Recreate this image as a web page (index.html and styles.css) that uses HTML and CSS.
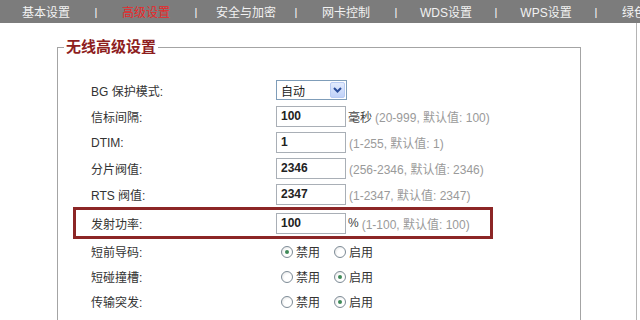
FILE: index.html
```html
<!DOCTYPE html>
<html lang="zh-CN">
<head>
<meta charset="utf-8">
<title>无线高级设置</title>
<link rel="stylesheet" href="styles.css">
</head>
<body>
<nav class="nav">
  <span class="item">基本设置</span><span class="sep">|</span>
  <span class="item active">高级设置</span><span class="sep">|</span>
  <span class="item">安全与加密</span><span class="sep">|</span>
  <span class="item">网卡控制</span><span class="sep">|</span>
  <span class="item">WDS设置</span><span class="sep">|</span>
  <span class="item">WPS设置</span><span class="sep">|</span>
  <span class="item">绿色无线</span>
</nav>
<div class="page">
  <fieldset class="box">
    <legend class="title">无线高级设置</legend>
    <div class="rows">
      <div class="row">
        <span class="label">BG 保护模式:</span>
        <div class="field">
          <div class="select"><span class="sel-text">自动</span><span class="sel-arrow"><svg width="9" height="6" viewBox="0 0 9 6"><path d="M1 1 L4.5 4.5 L8 1" fill="none" stroke="#2a4d9b" stroke-width="2"/></svg></span></div>
        </div>
      </div>
      <div class="row">
        <span class="label">信标间隔:</span>
        <div class="field"><span class="input">100</span><span class="unit">毫秒</span><span class="hint">(20-999, 默认值: 100)</span></div>
      </div>
      <div class="row">
        <span class="label">DTIM:</span>
        <div class="field"><span class="input">1</span><span class="hint">(1-255, 默认值: 1)</span></div>
      </div>
      <div class="row">
        <span class="label">分片阀值:</span>
        <div class="field"><span class="input">2346</span><span class="hint">(256-2346, 默认值: 2346)</span></div>
      </div>
      <div class="row">
        <span class="label">RTS 阀值:</span>
        <div class="field"><span class="input">2347</span><span class="hint">(1-2347, 默认值: 2347)</span></div>
      </div>
      <div class="row row-hl">
        <span class="label">发射功率:</span>
        <div class="field"><span class="input">100</span><span class="unit">%</span><span class="hint">(1-100, 默认值: 100)</span></div>
      </div>
      <div class="row row-radio">
        <span class="label">短前导码:</span>
        <div class="field radios">
          <span class="radio checked"></span><span class="rlabel">禁用</span>
          <span class="radio"></span><span class="rlabel">启用</span>
        </div>
      </div>
      <div class="row row-radio">
        <span class="label">短碰撞槽:</span>
        <div class="field radios">
          <span class="radio"></span><span class="rlabel">禁用</span>
          <span class="radio checked"></span><span class="rlabel">启用</span>
        </div>
      </div>
      <div class="row row-radio">
        <span class="label">传输突发:</span>
        <div class="field radios">
          <span class="radio"></span><span class="rlabel">禁用</span>
          <span class="radio checked"></span><span class="rlabel">启用</span>
        </div>
      </div>
      <div class="row row-radio">
        <span class="label">WMM 能力:</span>
        <div class="field radios">
          <span class="radio checked"></span><span class="rlabel">禁用</span>
          <span class="radio"></span><span class="rlabel">启用</span>
        </div>
      </div>
    </div>
  </fieldset>
</div>
</body>
</html>
```

FILE: styles.css
```css
html, body {
  margin: 0;
  padding: 0;
  background: #ffffff;
  overflow: hidden;
  height: 320px;
}
body {
  font-family: "Liberation Sans", Arial, "Noto Sans CJK SC", sans-serif;
  font-size: 12px;
  color: #333333;
}
.nav {
  display: flex;
  height: 23px;
  align-items: center;
  background: #7c7c7c;
  white-space: nowrap;
  overflow: hidden;
  color: #f2f2f2;
}
.item {
  flex: 0 0 92px;
  text-align: center;
}
.item.active {
  color: #e8282a;
}
.sep {
  flex: 0 0 8px;
  text-align: center;
  color: #ffffff;
  font-size: 11px;
}
.page {
  width: 637px;
  height: 297px;
  border-right: 1px solid #b4b4b4;
  box-sizing: border-box;
  padding-top: 15px;
  overflow: hidden;
}
.box {
  margin: 0 0 0 57px;
  width: 524px;
  box-sizing: border-box;
  border: 1px solid #a4a4a4;
  padding: 21px 0 0 0;
}
.title {
  margin-left: 6px;
  padding: 0 2px;
  font-size: 15px;
  line-height: 18px;
  font-weight: bold;
  color: #8e1e1e;
}
.rows {
  padding-left: 15px;
}
.row {
  display: grid;
  grid-template-columns: 185px auto;
  align-items: center;
  width: 420px;
  height: 26px;
  box-sizing: border-box;
  border: 3px solid transparent;
  padding-left: 15px;
}
.row-hl {
  height: 32px;
  border-color: #8c2626;
}
.row-radio {
  height: 25px;
}
.label {
  color: #333333;
  white-space: nowrap;
}
.field {
  display: flex;
  align-items: center;
  white-space: nowrap;
}
.input {
  display: block;
  width: 70px;
  height: 21px;
  line-height: 19px;
  box-sizing: border-box;
  border: 1px solid #a9afb6;
  padding-left: 4px;
  font-weight: bold;
  color: #222222;
  background: #ffffff;
}
.unit {
  margin-left: 2px;
  color: #444444;
}
.hint {
  margin-left: 3px;
  color: #9a9a9a;
}
.input + .hint {
  margin-left: 3px;
}
.select {
  display: flex;
  align-items: center;
  width: 71px;
  height: 20px;
  box-sizing: border-box;
  border: 1px solid #7f9db9;
  background: #ffffff;
  padding: 1px;
}
.sel-text {
  flex: 1;
  padding-left: 3px;
  color: #222222;
}
.sel-arrow {
  display: flex;
  align-items: center;
  justify-content: center;
  width: 15px;
  height: 16px;
  box-sizing: border-box;
  border: 1px solid #b8cbf3;
  border-radius: 2px;
  background: linear-gradient(#e2ebfd, #bfd1f8);
}
.radios {
  padding-left: 5px;
}
.radio {
  display: block;
  width: 12px;
  height: 12px;
  box-sizing: border-box;
  border: 1px solid #7d8b96;
  border-radius: 50%;
  background: radial-gradient(circle at 60% 60%, #ffffff 40%, #dcdcdc 100%);
  position: relative;
}
.radio.checked::after {
  content: "";
  position: absolute;
  left: 3px;
  top: 3px;
  width: 4px;
  height: 4px;
  border-radius: 50%;
  background: #3f8a58;
}
.rlabel {
  margin-left: 3px;
  margin-right: 14px;
  color: #333333;
}
```
